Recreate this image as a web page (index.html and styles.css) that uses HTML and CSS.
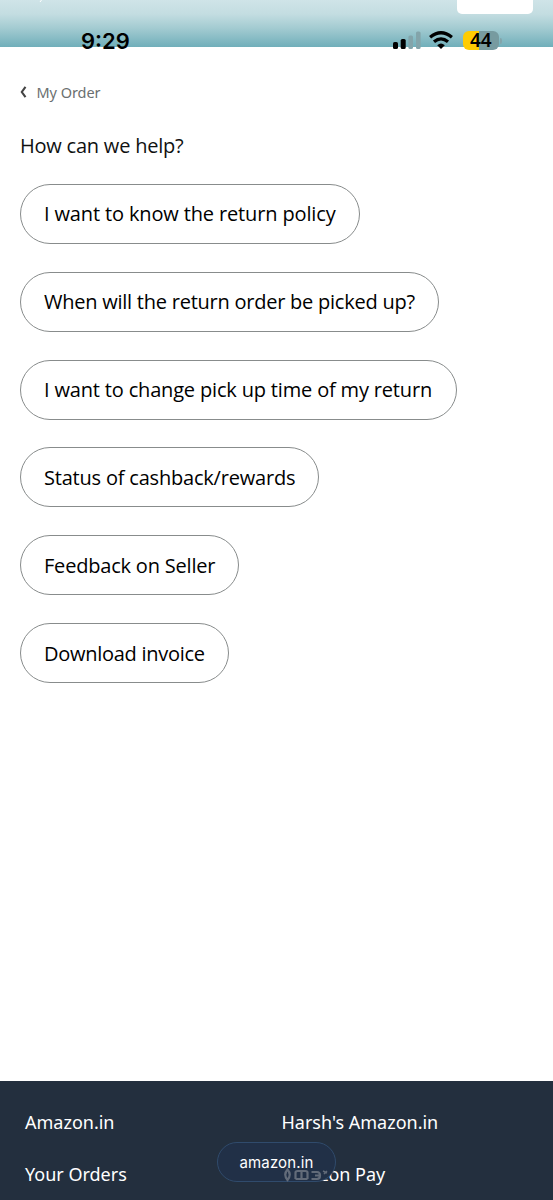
FILE: index.html
```html
<!DOCTYPE html>
<html lang="en">
<head>
<meta charset="utf-8">
<title>Help</title>
<link rel="stylesheet" href="styles.css">
</head>
<body>
<div class="screen">
  <header class="top">
    <div class="top-card"></div>
    <svg class="speck" width="6" height="3" viewBox="0 0 6 3"><path d="M2.5 0 1 2" stroke="#fff" fill="none"/></svg>
    <div class="status">
      <span class="time">9:29</span>
      <div class="indicators">
        <svg class="signal" width="29" height="18" viewBox="0 0 29 18">
          <rect x="0" y="11" width="5" height="7" rx="1.6"/>
          <rect x="7.7" y="8" width="5" height="10" rx="1.6"/>
          <g fill="#83a4aa"><rect x="15.4" y="4.5" width="4.6" height="13.5" rx="1.6"/><rect x="23" y="0.5" width="4.6" height="17.5" rx="1.6"/></g>
        </svg>
        <svg class="wifi" width="24" height="18" viewBox="0 0 24 18">
          <g fill="none" stroke="#000" stroke-width="3.2"><path d="M1.1 6.3Q12-2.8 22.9 6.3"/><path d="M5 10.8Q12 4.8 19 10.8"/></g>
          <path d="M8.2 14.2Q12 11 15.8 14.2L12 18Z"/>
        </svg>
        <div class="battery"><span class="level">44</span><i class="cap"></i></div>
      </div>
    </div>
  </header>
  <main class="main">
    <a class="back"><svg width="7" height="12" viewBox="0 0 7 12"><path d="M5.5 .8 1.8 6l3.7 5.2" fill="none" stroke="#444" stroke-width="2.1"/></svg><span>My Order</span></a>
    <h1 class="title">How can we help?</h1>
    <div class="options">
      <button class="option policy">I want to know the return policy</button>
      <button class="option pickup">When will the return order be picked up?</button>
      <button class="option change">I want to change pick up time of my return</button>
      <button class="option cashback">Status of cashback/rewards</button>
      <button class="option feedback">Feedback on Seller</button>
      <button class="option invoice">Download invoice</button>
    </div>
  </main>
  <footer class="footer">
    <a>Amazon.in</a><a>Harsh's Amazon.in</a>
    <a>Your Orders</a><a>Amazon Pay</a>
  </footer>
  <div class="address">
    <svg class="refraction" width="48" height="14" viewBox="0 0 48 14">
      <g fill="none" stroke="#626b79" stroke-width="2.2">
        <path d="M4.5 1.5Q0 6.5 4.5 12Q9 6.5 4.5 1.5Z"/>
        <path d="M12.5 11V4.5Q12.5 3 14.5 3H22.5Q24.5 3 24.5 4.5V11M18.5 3V11M12.5 11H24.5"/>
        <path d="M28.5 4H34Q37 4 37 7.5T34 11H28.5M32 7.5H36.5"/>
        <path d="M40 3 44 5M44 3 41 6" stroke-width="1.5"/>
      </g>
    </svg>
    <span class="host">amazon.in</span>
  </div>
</div>
</body>
</html>
```
FILE: styles.css
```css
* { box-sizing: border-box; }
body { margin: 0; background: #fff; font-family: "Noto Sans", sans-serif; color: #0f1111; }
.screen { position: relative; width: 553px; height: 1200px; overflow: hidden; display: flex; flex-direction: column; }
.top { position: relative; height: 47px; flex: none; background: linear-gradient(#cfe4e8, #c3dde1 30%, #a3cbd1 60%, #70afba); }
.top-card { position: absolute; top: -10px; right: 20px; width: 76px; height: 24px; border-radius: 5px; background: #fff; }
.speck { position: absolute; left: 39px; top: 0; }
.status { display: flex; justify-content: space-between; padding: 28px 54.5px 0 81px; height: 52px; }
.time { font: 600 22px/26px Inter, sans-serif; color: #000; }
.indicators { position: relative; display: flex; align-items: flex-start; padding-top: 3px; }
.signal { margin-right: 7.5px; }
.wifi { margin-right: 10px; }
.battery { position: relative; width: 35.5px; height: 19px; border-radius: 6px; background: linear-gradient(90deg, #ffcc02 16px, #779ba0 16px); text-align: center; }
.level { display: block; font: 600 19px/19px "Noto Sans", sans-serif; color: #000; }
.cap { position: absolute; left: 36.5px; top: 7px; width: 2px; height: 6px; border-radius: 0 2px 2px 0; background: #83a4aa; }
.main { flex: 1; padding: 35px 20px 0; }
.back { display: flex; align-items: center; gap: 9.5px; height: 20px; font-size: 14.5px; line-height: 20px; letter-spacing: -.05px; color: #6b6f70; }
.title { margin: 30px 0 0; font: 400 20px/28px "Open Sans", sans-serif; letter-spacing: -.22px; }
.options { display: flex; flex-direction: column; align-items: flex-start; gap: 27.9px; margin-top: 23.8px; }
.option { height: 60px; padding: 1px 0 0 23px; border: 1px solid #888c8c; border-radius: 30px; background: #fff; font: 400 20px/28px "Open Sans", "Noto Sans", sans-serif; letter-spacing: -.2px; color: #000; text-align: left; white-space: nowrap; }
.policy { width: 340px; letter-spacing: -.14px; }
.pickup { width: 419px; letter-spacing: -.24px; }
.change { width: 437px; letter-spacing: -.17px; }
.cashback { width: 299px; }
.feedback { width: 219px; }
.invoice { width: 209px; letter-spacing: -.28px; }
.footer { flex: none; height: 119px; padding: 27px 25px 0; display: grid; grid-template-columns: 256.5px 1fr; grid-auto-rows: 51.5px; background: #232f3e; color: #fff; font-size: 18px; line-height: 28px; }
.address { position: absolute; left: 217px; top: 1142px; width: 119px; height: 40px; border: 1px solid #304b6c; border-radius: 20px; background: #213047; color: #fff; font: 400 15px/39px Inter, sans-serif; text-align: center; }
.refraction { position: absolute; left: 65px; top: 25px; filter: blur(.6px); }
.host { position: relative; letter-spacing: .15px; }
```
